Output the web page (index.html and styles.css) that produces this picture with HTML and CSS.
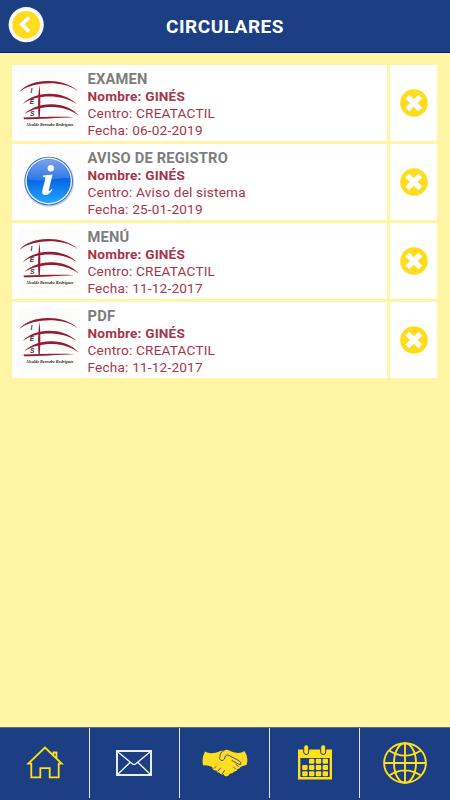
FILE: index.html
```html
<!DOCTYPE html>
<html lang="es">
<head>
<meta charset="utf-8">
<title>Circulares</title>
<link rel="stylesheet" href="styles.css">
</head>
<body>
<svg class="defs" width="0" height="0">
  <symbol id="ies" viewBox="0 0 61 64">
    <rect width="61" height="64" fill="#fcfdfa"/>
    <g fill="#951b35">
      <path d="M1 20.500C11 7.500 43 6 58 19.500C44 9.500 15 10 1 20.500Z"/>
      <path d="M4.500 32.500C16 20 43 19 57 32.500C43 23 17 23 4.500 32.500Z"/>
      <path d="M6 42.500C20 30 47 30 59 44C44 33.500 22 34 6 42.500Z"/>
      <path d="M4.500 46.500C20 46.500 40 45.200 55 46.200C40 46.800 20 48 5 48.200Z"/>
      <path d="M20.600 14C21.500 24 21.500 36 20.800 46H19.500C18.900 36 18.800 24 20.600 14Z"/>
    </g>
    <g fill="none" stroke="#951b35" stroke-width=".4">
      <path d="M1 20.500C11 8 43 7 58 19.500M4.500 32.500C16 21 43 20 57 32.500M6 42.500C20 31 47 31 59 44"/>
    </g>
  </symbol>
  <symbol id="info" viewBox="0 0 61 64">
    <defs>
      <linearGradient id="blue" x1="0" y1="0" x2="0" y2="1"><stop offset="0" stop-color="#1650cf"/><stop offset=".5" stop-color="#0868e6"/><stop offset="1" stop-color="#23a6ff"/></linearGradient>
      <linearGradient id="shine" x1="0" y1="0" x2="0" y2="1"><stop offset="0" stop-color="#b5cff6"/><stop offset="1" stop-color="#3a82e8"/></linearGradient>
    </defs>
    <rect width="61" height="64" fill="#fdfdfd"/>
    <circle cx="30.200" cy="32" r="25" fill="#d3d5d9"/>
    <circle cx="29.700" cy="31" r="24.300" fill="#2d6cca"/>
    <circle cx="29.700" cy="31" r="23.400" fill="#e8f2ff"/>
    <circle cx="29.700" cy="31" r="22" fill="url(#blue)"/>
    <path d="M8.500 29A21.300 21.300 0 0 1 50.900 28C40 27 22 33 8.500 29Z" fill="url(#shine)" opacity=".65"/>
    <circle cx="31.800" cy="18.300" r="3.200" fill="#fff"/>
    <path d="M24 25.500L33.600 24.500L29.700 40.200C29.500 41.800 31 41.200 32.600 39L33.500 39.800C31 43.700 28.500 45.200 25.700 45C23.200 44.700 22.700 42.800 23.400 40L26.400 28.600C26.700 27.200 25.500 27 23.900 26.900Z" fill="#fff"/>
  </symbol>
  <symbol id="close" viewBox="0 0 28 28">
    <circle cx="14" cy="14" r="13.800" fill="#ffdc20"/>
    <path d="M7.300 7.600L20.300 20.400M20.300 7.600L7.300 20.400" stroke="#fff" stroke-width="5.400" fill="none"/>
  </symbol>
</svg>
<div class="screen">
  <header class="header">
    <button class="back" aria-label="Volver"><svg width="36" height="36" viewBox="0 0 36 36"><circle cx="18.200" cy="17.700" r="17.600" fill="#fafafa"/><circle cx="18.200" cy="17.700" r="13.800" fill="#ffdc20"/><path d="M21 10.500L13.900 17.500L21 24.500" fill="none" stroke="#fff" stroke-width="3.800"/></svg></button>
    <h1>CIRCULARES</h1>
  </header>
  <main class="list">
    <article class="row">
      <div class="card"><svg class="thumb" viewBox="0 0 61 64"><use href="#ies"/><g class="logo-letters"><text x="11.500" y="22">I</text><text x="10.700" y="33">E</text><text x="11" y="44.500">S</text></g><text class="logo-name" x="7" y="54.500" textLength="47.500" lengthAdjust="spacingAndGlyphs">Alcalde Bernabe Rodríguez</text></svg><div class="text"><h2>EXAMEN</h2><p class="name">Nombre: GINÉS</p><p>Centro: CREATACTIL</p><p>Fecha: 06-02-2019</p></div></div>
      <button class="remove" aria-label="Eliminar"><svg width="28" height="28"><use href="#close"/></svg></button>
    </article>
    <article class="row">
      <div class="card"><svg class="thumb"><use href="#info"/></svg><div class="text"><h2>AVISO DE REGISTRO</h2><p class="name">Nombre: GINÉS</p><p>Centro: Aviso del sistema</p><p>Fecha: 25-01-2019</p></div></div>
      <button class="remove" aria-label="Eliminar"><svg width="28" height="28"><use href="#close"/></svg></button>
    </article>
    <article class="row">
      <div class="card"><svg class="thumb" viewBox="0 0 61 64"><use href="#ies"/><g class="logo-letters"><text x="11.500" y="22">I</text><text x="10.700" y="33">E</text><text x="11" y="44.500">S</text></g><text class="logo-name" x="7" y="54.500" textLength="47.500" lengthAdjust="spacingAndGlyphs">Alcalde Bernabe Rodríguez</text></svg><div class="text"><h2>MENÚ</h2><p class="name">Nombre: GINÉS</p><p>Centro: CREATACTIL</p><p>Fecha: 11-12-2017</p></div></div>
      <button class="remove" aria-label="Eliminar"><svg width="28" height="28"><use href="#close"/></svg></button>
    </article>
    <article class="row">
      <div class="card"><svg class="thumb" viewBox="0 0 61 64"><use href="#ies"/><g class="logo-letters"><text x="11.500" y="22">I</text><text x="10.700" y="33">E</text><text x="11" y="44.500">S</text></g><text class="logo-name" x="7" y="54.500" textLength="47.500" lengthAdjust="spacingAndGlyphs">Alcalde Bernabe Rodríguez</text></svg><div class="text"><h2>PDF</h2><p class="name">Nombre: GINÉS</p><p>Centro: CREATACTIL</p><p>Fecha: 11-12-2017</p></div></div>
      <button class="remove" aria-label="Eliminar"><svg width="28" height="28"><use href="#close"/></svg></button>
    </article>
  </main>
  <nav class="nav">
    <a><svg width="38" height="36" viewBox="0 0 38 36"><path d="M2.300 18.600L19 2.500L35.700 18.600H32.700V32.300H23.700V23.200H14.300V32.300H5.300V18.600ZM27.500 10.300V7.500H30.500V13.200" fill="none" stroke="#ffe01b" stroke-width="1.800"/></svg></a>
    <a><svg width="37" height="26" viewBox="0 0 37 26"><g fill="none" stroke="#f4f6fb"><rect x="1" y="1" width="34" height="24" stroke-width="1.900"/><path d="M2 2L16.500 14Q18 15.200 19.500 14L34 2M2 24L14 12.500M34 24L22 12.500" stroke-width="1.300"/></g></svg></a>
    <a><svg width="46" height="30" viewBox="0 0 46 30">
      <path d="M3 3.500C8 6.500 13 5 18 3.200Q20 2.700 22 2.500Q25 .500 29 3.200C34 5.500 39 5.500 42.500 3Q47 9.500 44.500 17Q41 17.500 38.500 19Q38 21 35.500 21Q35 23.500 32 23.500Q31 26 28 25.500Q26.500 28.500 23.500 28.200Q21.500 28 21.700 26Q19 27.500 17.500 24.800Q14.500 25 14.500 22.500Q10.500 23 10.200 19Q6 16.800 1 17.200Q-.500 9.500 3 3.500Z" fill="#ffdc20"/>
      <path d="M22 2.500C17.500 4 18.500 8 17.500 10.500Q19.500 14.500 22.500 11Q23 6.500 26 7L37 12.700Q40 14.500 38.500 16.500Q36.500 16.500 34.500 15L30 12.500M36.500 18.500L34 16.500M33.500 21L31.500 19M12 20.500L14 18.500M16 23L18.500 20M20.500 25.500L22.500 22.500" fill="none" stroke="#294782" stroke-width=".9" stroke-linecap="round"/></svg></a>
    <a><svg width="34" height="38" viewBox="0 0 34 38"><path fill-rule="evenodd" d="M0 5.500H34V35.500H0ZM2.400 14V33H31.700V14Z" fill="#ffe01b"/><g fill="#ffe01b" stroke="#1c3e82" stroke-width="1"><rect x="5.700" y=".700" width="5" height="9.800" rx="2.500"/><rect x="22.700" y=".700" width="5" height="9.800" rx="2.500"/></g><g fill="#ffe01b"><rect x="11" y="14.800" width="5.400" height="5" rx="1"/><rect x="17.800" y="14.800" width="5.400" height="5" rx="1"/><rect x="24.600" y="14.800" width="5.400" height="5" rx="1"/><rect x="4.200" y="21" width="5.400" height="5" rx="1"/><rect x="11" y="21" width="5.400" height="5" rx="1"/><rect x="17.800" y="21" width="5.400" height="5" rx="1"/><rect x="24.600" y="21" width="5.400" height="5" rx="1"/><rect x="4.200" y="27.300" width="5.400" height="5" rx="1"/><rect x="11" y="27.300" width="5.400" height="5" rx="1"/><rect x="17.800" y="27.300" width="5.400" height="5" rx="1"/><rect x="24.600" y="27.300" width="5.400" height="5" rx="1"/></g></svg></a>
    <a><svg width="44" height="43" viewBox="0 0 44 43"><g fill="none" stroke="#ffe01b" stroke-width="1.900"><ellipse cx="22" cy="21" rx="20.900" ry="19.700"/><ellipse cx="22" cy="21" rx="11" ry="19.700"/><path d="M22 1V41M1 21H43M6.500 8.800Q22 18.500 37.500 8.800M6.500 33.200Q22 23.500 37.500 33.200"/></g></svg></a>
  </nav>
</div>
</body>
</html>
```

FILE: styles.css
```css
* { box-sizing: border-box; }
body { margin: 0; font-family: Roboto, "Liberation Sans", sans-serif; background: #fff5a4; }
h1, h2, p { margin: 0; }
button { border: 0; padding: 0; font: inherit; }
svg { display: block; }
.defs { position: absolute; }
.screen { width: 450px; height: 800px; display: flex; flex-direction: column; background: #fff5a4; }
.header { height: 53px; flex: none; display: grid; grid-template-columns: 44px 1fr 44px; background: #1c3e82; border-bottom: 1px solid #0b1c78; }
.back { background: none; width: 36px; height: 36px; margin: 7px 0 0 8px; }
h1 { color: #fff; font-size: 19px; font-weight: 700; line-height: 54px; text-align: center; letter-spacing: .5px; }
.list { flex: 1; padding: 12px 13px 0 12px; display: flex; flex-direction: column; gap: 3px; }
.row { height: 76px; display: grid; grid-template-columns: 1fr 47px; gap: 3px; }
.card { background: #fff; display: flex; padding: 6px 0 0 7px; }
.thumb { width: 61px; height: 64px; margin-right: 7.500px; overflow: visible; }
.text { color: #a73548; font-size: 13.600px; line-height: 17px; letter-spacing: .2px; }
.text h2 { color: #7d7d7d; font-size: 14.700px; font-weight: 700; line-height: 17px; letter-spacing: .2px; }
.name { font-weight: 700; }
.remove { background: #fff; display: flex; align-items: center; justify-content: center; }
.nav { height: 73px; display: grid; grid-template-columns: repeat(5, 90px); background: #1c3e82; border-top: 1px solid #596d82; padding-bottom: 2px; }
.nav a { display: flex; align-items: center; justify-content: center; border-right: 1px solid #e4e7ef; }
.nav a:last-child { border: 0; }
.logo-letters { font: italic 700 6.500px "Liberation Sans", sans-serif; fill: #333; }
.logo-name { font: italic 700 4.600px "Liberation Serif", serif; fill: #2b2226; }
```
